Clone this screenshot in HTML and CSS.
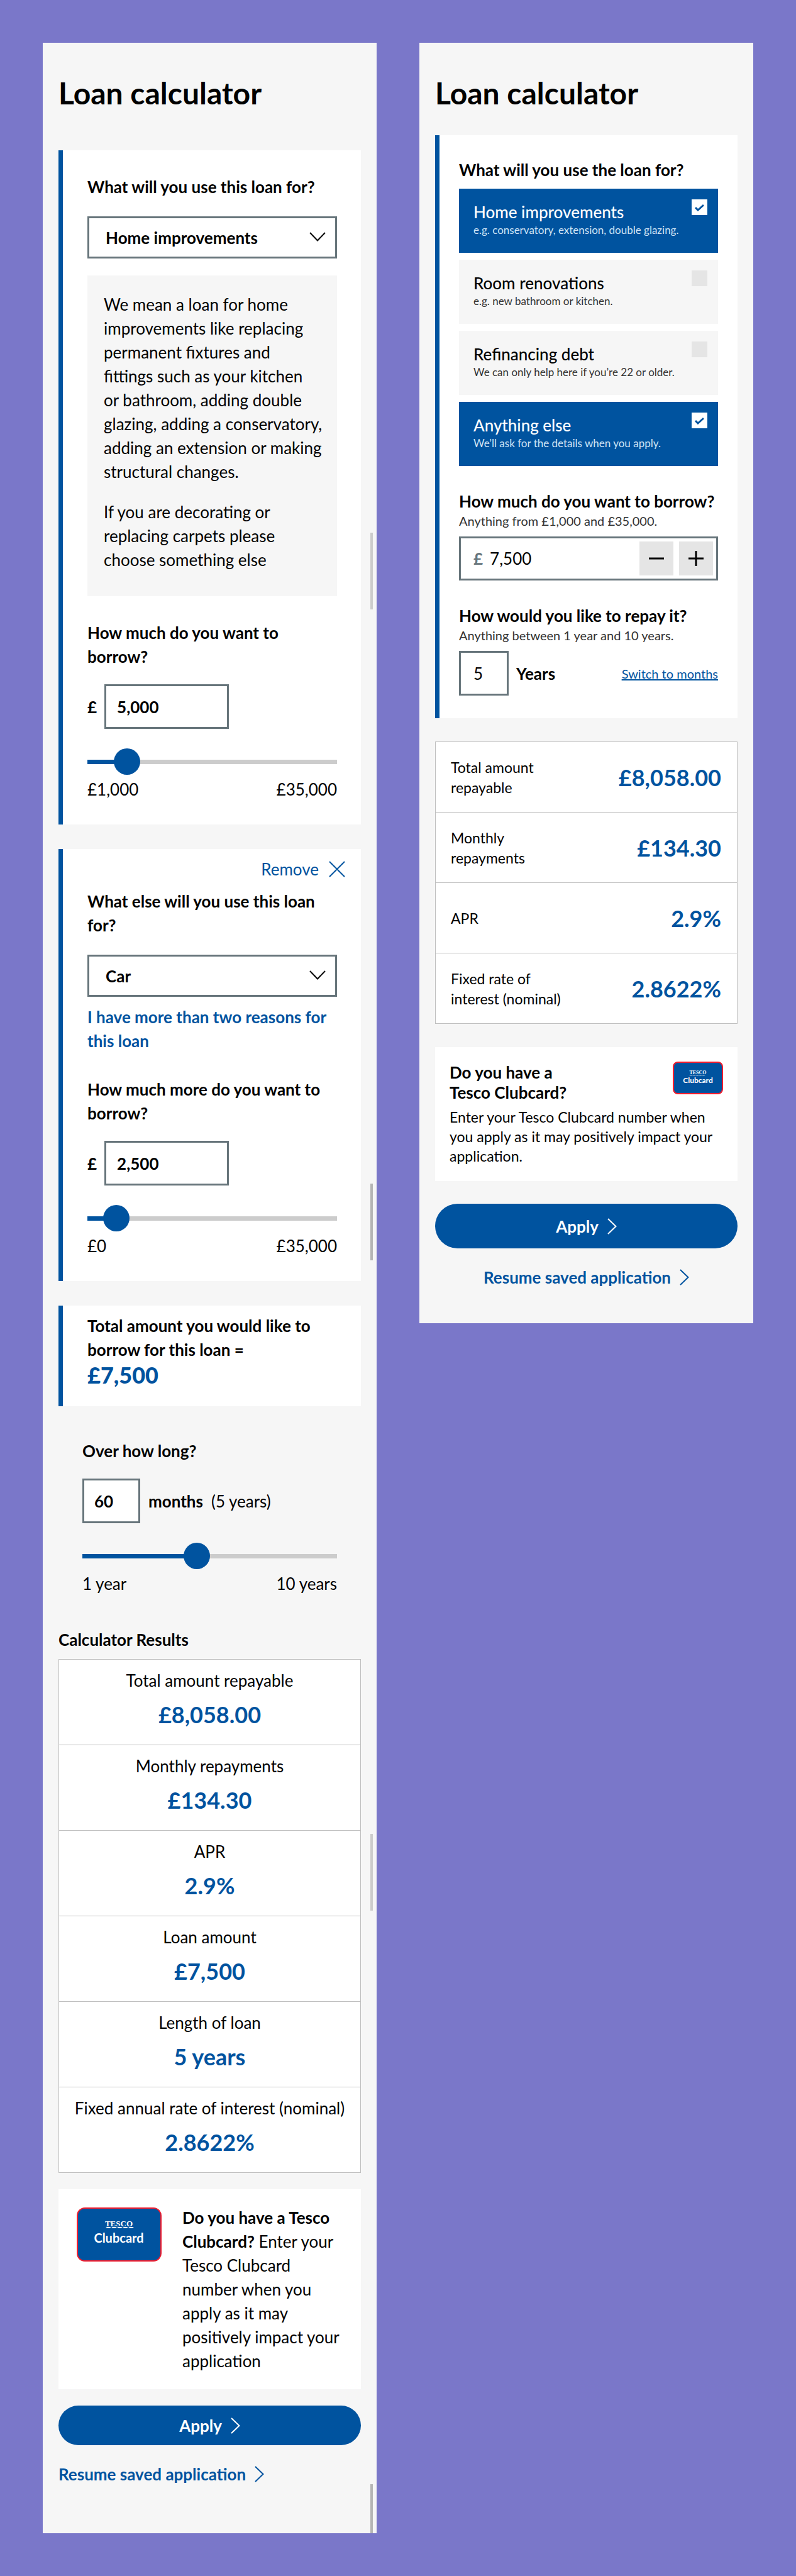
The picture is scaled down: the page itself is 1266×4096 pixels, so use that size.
FILE: index.html
```html
<!DOCTYPE html>
<html lang="en">
<head>
  <meta charset="UTF-8">
  <meta name="viewport" content="width=device-width, initial-scale=1.0">
  <title>Loan calculator</title>
  <link rel="stylesheet" href="styles.css">
</head>
<body>

  <main class="panel">
    <h1>Loan calculator</h1>

    <section class="card">
      <label class="question" for="reason">What will you use this loan for?</label>
      <div class="select">
        <select id="reason">
          <option>Home improvements</option>
          <option>Car</option>
        </select>
        <svg class="icon chevron-down" viewBox="0 0 26 15"><path d="M1 1l12 12.500L25 1"/></svg>
      </div>
      <div class="note">
        <p>We mean a loan for home<br>improvements like replacing<br>permanent fixtures and<br>fittings such as your kitchen<br>or bathroom, adding double<br>glazing, adding a conservatory,<br>adding an extension or making<br>structural changes.</p>
        <p>If you are decorating or<br>replacing carpets please<br>choose something else</p>
      </div>
      <label class="question" for="amount">How much do you want to<br>borrow?</label>
      <div class="amount">
        <span>£</span>
        <input type="text" id="amount" value="5,000">
      </div>
      <input class="slider" type="range" min="1000" max="35000" value="5000" step="500" style="--fill: 12%" aria-label="Amount">
      <div class="limits"><span>£1,000</span><span>£35,000</span></div>
    </section>

    <section class="card card-extra">
      <button type="button" class="remove">Remove <svg class="icon cross" viewBox="0 0 26 26"><path d="M1 1l24 24M25 1L1 25"/></svg></button>
      <label class="question" for="reasonTwo">What else will you use this loan<br>for?</label>
      <div class="select">
        <select id="reasonTwo">
          <option>Car</option>
          <option>Home improvements</option>
        </select>
        <svg class="icon chevron-down" viewBox="0 0 26 15"><path d="M1 1l12 12.500L25 1"/></svg>
      </div>
      <a class="more" href="#">I have more than two reasons for<br>this loan</a>
      <label class="question" for="amountTwo">How much more do you want to<br>borrow?</label>
      <div class="amount">
        <span>£</span>
        <input type="text" id="amountTwo" value="2,500">
      </div>
      <input class="slider" type="range" min="0" max="35000" value="2500" step="500" style="--fill: 8%" aria-label="Extra amount">
      <div class="limits"><span>£0</span><span>£35,000</span></div>
    </section>

    <section class="card card-total">
      <p>Total amount you would like to<br>borrow for this loan =</p>
      <strong>£7,500</strong>
    </section>

    <section class="term">
      <label class="question" for="months">Over how long?</label>
      <div class="months">
        <input type="text" id="months" value="60">
        <b>months</b>
        <span>(5 years)</span>
      </div>
      <input class="slider" type="range" min="12" max="120" value="60" style="--fill: 45%" aria-label="Months">
      <div class="limits"><span>1 year</span><span>10 years</span></div>
    </section>

    <h2>Calculator Results</h2>
    <table class="results stacked">
      <tr><th>Total amount repayable</th><td>£8,058.00</td></tr>
      <tr><th>Monthly repayments</th><td>£134.30</td></tr>
      <tr><th>APR</th><td>2.9%</td></tr>
      <tr><th>Loan amount</th><td>£7,500</td></tr>
      <tr><th>Length of loan</th><td>5 years</td></tr>
      <tr><th>Fixed annual rate of interest (nominal)</th><td>2.8622%</td></tr>
    </table>

    <section class="clubcard">
      <svg class="clubcard-logo" viewBox="0 0 135 86">
        <rect class="card-face" x="1" y="1" width="133" height="84" rx="12"/>
        <text class="card-brand" x="67" y="30" text-anchor="middle">TESCO</text>
        <path class="card-stripes" d="M48 31h7l-3 2h-6zM57 31h7l-3 2h-6zM66 31h7l-3 2h-6zM75 31h7l-3 2h-6zM84 31h7l-3 2h-6z"/>
        <text class="card-name" x="67" y="56" text-anchor="middle">Clubcard</text>
      </svg>
      <p><b>Do you have a Tesco<br>Clubcard?</b> Enter your<br>Tesco Clubcard<br>number when you<br>apply as it may<br>positively impact your<br>application</p>
    </section>

    <button type="button" class="apply">Apply <svg class="icon chevron-right" viewBox="0 0 15 26"><path d="M1 1l12.500 12L1 25"/></svg></button>
    <a class="resume" href="#">Resume saved application <svg class="icon chevron-right" viewBox="0 0 15 26"><path d="M1 1l12.500 12L1 25"/></svg></a>

    <i class="scrollbar scrollbar-one"></i>
    <i class="scrollbar scrollbar-two"></i>
    <i class="scrollbar scrollbar-three"></i>
    <i class="scrollbar scrollbar-four"></i>
  </main>

  <main class="panel panel-new">
    <h1>Loan calculator</h1>

    <section class="card">
      <fieldset>
        <legend class="question">What will you use the loan for?</legend>
        <label class="tile checked">
          <span class="tile-title">Home improvements</span>
          <span class="tile-hint">e.g. conservatory, extension, double glazing.</span>
          <input type="checkbox" checked>
          <svg class="icon tick" viewBox="0 0 15 12"><path d="M1 6l4 4 9-8"/></svg>
        </label>
        <label class="tile">
          <span class="tile-title">Room renovations</span>
          <span class="tile-hint">e.g. new bathroom or kitchen.</span>
          <input type="checkbox">
        </label>
        <label class="tile">
          <span class="tile-title">Refinancing debt</span>
          <span class="tile-hint">We can only help here if you’re 22 or older.</span>
          <input type="checkbox">
        </label>
        <label class="tile checked">
          <span class="tile-title">Anything else</span>
          <span class="tile-hint">We’ll ask for the details when you apply.</span>
          <input type="checkbox" checked>
          <svg class="icon tick" viewBox="0 0 15 12"><path d="M1 6l4 4 9-8"/></svg>
        </label>
      </fieldset>

      <label class="question" for="borrow">How much do you want to borrow?</label>
      <p class="hint">Anything from £1,000 and £35,000.</p>
      <div class="stepper">
        <span>£</span>
        <input type="text" id="borrow" value="7,500">
        <button type="button" aria-label="Less"><svg class="icon" viewBox="0 0 24 24"><path d="M0 12h24"/></svg></button>
        <button type="button" aria-label="More"><svg class="icon" viewBox="0 0 24 24"><path d="M0 12h24M12 0v24"/></svg></button>
      </div>

      <label class="question" for="years">How would you like to repay it?</label>
      <p class="hint">Anything between 1 year and 10 years.</p>
      <div class="years">
        <input type="text" id="years" value="5">
        <b>Years</b>
        <a href="#">Switch to months</a>
      </div>
    </section>

    <table class="results">
      <tr><th>Total amount<br>repayable</th><td>£8,058.00</td></tr>
      <tr><th>Monthly<br>repayments</th><td>£134.30</td></tr>
      <tr><th>APR</th><td>2.9%</td></tr>
      <tr><th>Fixed rate of<br>interest (nominal)</th><td>2.8622%</td></tr>
    </table>

    <section class="clubcard">
      <div class="clubcard-head">
        <h2>Do you have a<br>Tesco Clubcard?</h2>
        <svg class="clubcard-logo" viewBox="0 0 80 52">
          <rect class="card-face" x="1" y="1" width="78" height="50" rx="7"/>
          <text class="card-brand" x="40" y="20" text-anchor="middle">TESCO</text>
          <path class="card-stripes" d="M28 21h4l-2 1h-4zM33 21h4l-2 1h-4zM38 21h4l-2 1h-4zM43 21h4l-2 1h-4zM48 21h4l-2 1h-4z"/>
          <text class="card-name" x="40" y="34" text-anchor="middle">Clubcard</text>
        </svg>
      </div>
      <p>Enter your Tesco Clubcard number when<br>you apply as it may positively impact your<br>application.</p>
    </section>

    <button type="button" class="apply">Apply <svg class="icon chevron-right" viewBox="0 0 15 26"><path d="M1 1l12.500 12L1 25"/></svg></button>
    <a class="resume" href="#">Resume saved application <svg class="icon chevron-right" viewBox="0 0 15 26"><path d="M1 1l12.500 12L1 25"/></svg></a>
  </main>

</body>
</html>
```
FILE: styles.css
```css
* {
  box-sizing: border-box;
}
body {
  margin: 0;
  padding: 68px;
  display: flex;
  align-items: flex-start;
  gap: 68px;
  background-color: #7a77c9;
  font-family: Lato, "Open Sans", sans-serif;
  font-size: 26px;
  line-height: 38px;
  color: #000;
}
p, h1, h2 {
  margin: 0;
}
button, input, select {
  font: inherit;
  color: inherit;
}
input[type="text"], select {
  border: 3px solid #67757b;
  border-radius: 0;
  background-color: #fff;
  font-weight: bold;
}
a {
  color: #00539f;
  text-decoration: none;
}
.icon {
  fill: none;
  stroke: currentColor;
  stroke-width: 2;
}
.panel {
  position: relative;
  flex: 1;
  min-width: 0;
  padding: 52px 25px 75px;
  background-color: #f6f6f6;
}
h1 {
  margin-bottom: 63px;
  font-size: 48px;
  line-height: 56px;
}
h2 {
  font-size: 26px;
}

/* cards */
.card {
  margin-bottom: 39px;
  padding: 39px 38px 37px 39px;
  border-left: 7px solid #00539f;
  background-color: #fff;
}
.question {
  display: block;
  padding: 0;
  font-weight: bold;
}
.select {
  position: relative;
  margin: 28px 0 27px;
}
select {
  display: block;
  width: 100%;
  height: 67px;
  padding: 0 26px;
  appearance: none;
}
.chevron-down {
  position: absolute;
  top: 25px;
  right: 18px;
  width: 26px;
  height: 15px;
  pointer-events: none;
}
.note {
  margin-bottom: 39px;
  padding: 27px 20px 39px 26px;
  background-color: #f6f6f6;
}
.note p + p {
  margin-top: 26px;
}
.amount {
  display: flex;
  align-items: center;
  gap: 12px;
  margin-top: 25px;
  font-weight: bold;
}
.amount input {
  width: 198px;
  height: 71px;
  padding: 0 17px;
}
.slider {
  display: block;
  width: 100%;
  height: 42px;
  margin: 31px 0 4px;
  appearance: none;
  background: none;
}
.slider::-webkit-slider-runnable-track {
  height: 7px;
  background: linear-gradient(to right, #00539f var(--fill), #ccc var(--fill));
}
.slider::-webkit-slider-thumb {
  width: 42px;
  height: 42px;
  margin-top: -18px;
  border-radius: 50%;
  background-color: #00539f;
  appearance: none;
}
.limits {
  display: flex;
  justify-content: space-between;
}
.card-extra {
  padding-top: 13px;
}
.card-extra .select {
  margin-bottom: 13px;
}
.remove {
  display: flex;
  align-items: center;
  gap: 16px;
  margin: 0 -13px 13px auto;
  padding: 0;
  border: none;
  background: none;
  color: #00539f;
}
.cross {
  width: 26px;
  height: 26px;
}
.more {
  display: block;
  margin-bottom: 39px;
  font-weight: bold;
}
.card-total {
  margin-bottom: 52px;
  padding-top: 13px;
  padding-bottom: 29px;
  font-weight: bold;
}
.card-total strong {
  display: block;
  font-size: 36px;
  line-height: 42px;
  color: #00539f;
}
.term {
  margin-bottom: 51px;
  padding: 0 38px;
}
.months {
  display: flex;
  align-items: center;
  gap: 13px;
  margin-top: 25px;
}
.months input {
  width: 92px;
  height: 71px;
  padding: 0 16px;
}

/* results */
.results {
  width: 100%;
  border-collapse: collapse;
  background-color: #fff;
}
.results tr {
  border: 1px solid #bfbfbf;
}
.results th {
  font-weight: normal;
}
.results td {
  font-size: 36px;
  font-weight: bold;
  line-height: 42px;
  color: #00539f;
}
.stacked {
  margin: 12px 0 26px;
  text-align: center;
}
.stacked th {
  display: block;
  padding: 14px 0;
}
.stacked td {
  display: block;
  padding: 0 0 27px;
}

/* clubcard */
.clubcard {
  display: flex;
  gap: 33px;
  margin-bottom: 26px;
  padding: 26px 29px;
  background-color: #fff;
}
.clubcard-logo {
  flex: none;
  width: 135px;
  height: 86px;
  margin-top: 3px;
}
.card-face {
  fill: #00539f;
  stroke: #ee1c2e;
  stroke-width: 2;
}
.card-brand {
  fill: #fff;
  font-family: "Liberation Serif", serif;
  font-size: 13px;
  font-weight: bold;
}
.card-stripes {
  fill: #fff;
}
.card-name {
  fill: #fff;
  font-size: 20px;
  font-weight: bold;
}
.apply {
  display: flex;
  align-items: center;
  justify-content: center;
  gap: 14px;
  width: 100%;
  height: 63px;
  margin-bottom: 27px;
  border: none;
  border-radius: 36px;
  background-color: #00539f;
  color: #fff;
  font-weight: bold;
}
.resume {
  display: flex;
  align-items: center;
  gap: 14px;
  font-weight: bold;
}
.chevron-right {
  width: 15px;
  height: 26px;
}
.scrollbar {
  position: absolute;
  right: 6px;
  width: 4px;
  height: 122px;
  background-color: #ccc;
}
.scrollbar-one {
  top: 779px;
}
.scrollbar-two {
  top: 1814px;
  background-color: #b5b5b5;
}
.scrollbar-three {
  top: 2848px;
}
.scrollbar-four {
  bottom: 0;
  height: 78px;
  background-color: #b5b5b5;
}

/* new design */
.panel-new {
  padding-bottom: 54px;
}
.panel-new h1 {
  margin-bottom: 39px;
}
.panel-new .card {
  margin-bottom: 37px;
  padding: 36px 31px;
}
.panel-new label.question {
  margin-top: 39px;
  line-height: 34px;
}
fieldset {
  margin: 0;
  padding: 0;
  border: none;
}
.tile {
  position: relative;
  display: block;
  height: 102px;
  margin-top: 11px;
  padding: 22px 23px;
  background-color: #f6f6f6;
}
.tile-title {
  display: block;
  font-size: 26px;
  font-weight: 500;
  line-height: 30px;
}
.tile-hint {
  display: block;
  margin-top: 2px;
  font-size: 17px;
  line-height: 24px;
  color: #333;
}
.tile input {
  position: absolute;
  top: 17px;
  right: 17px;
  width: 25px;
  height: 25px;
  margin: 0;
  appearance: none;
  background-color: #e5e5e5;
}
.tile.checked {
  background-color: #00539f;
  color: #fff;
}
.checked .tile-hint {
  color: #cfe3f5;
}
.checked input {
  background-color: #fff;
}
.tick {
  position: absolute;
  top: 24px;
  right: 22px;
  width: 15px;
  height: 12px;
  color: #00539f;
  stroke-width: 3;
}
.hint {
  margin-bottom: 11px;
  font-size: 20px;
  line-height: 28px;
  color: #333;
}
.stepper {
  display: flex;
  align-items: center;
  gap: 9px;
  height: 70px;
  padding: 0 5px 0 20px;
  border: 3px solid #67757b;
}
.stepper span {
  color: #67757b;
  font-weight: bold;
}
.stepper input[type="text"] {
  flex: 1;
  min-width: 0;
  padding: 0 2px;
  border: none;
  font-weight: normal;
}
.stepper button {
  display: flex;
  align-items: center;
  justify-content: center;
  width: 54px;
  height: 54px;
  border: none;
  background-color: #e5e5e5;
}
.stepper .icon {
  flex: none;
  width: 24px;
  height: 24px;
  stroke-width: 3;
}
.years {
  display: flex;
  align-items: center;
  gap: 12px;
}
.years input {
  width: 79px;
  height: 71px;
  padding: 0 20px;
  font-weight: normal;
}
.years a {
  margin-left: auto;
  font-size: 20px;
  text-decoration: underline;
}
.panel-new .results {
  margin-bottom: 37px;
}
.panel-new .results tr {
  height: 112px;
}
.panel-new .results th {
  padding: 0 24px;
  font-size: 23px;
  line-height: 32px;
  text-align: left;
}
.panel-new .results td {
  padding: 0 25px 0 0;
  text-align: right;
}
.panel-new .clubcard {
  display: block;
  margin-bottom: 36px;
  padding: 24px 23px;
  font-size: 23px;
  line-height: 31px;
}
.clubcard-head {
  display: flex;
  justify-content: space-between;
  margin-bottom: 8px;
}
.clubcard-head h2 {
  line-height: 32px;
}
.panel-new .clubcard-logo {
  width: 80px;
  height: 52px;
  margin-top: -1px;
}
.panel-new .card-brand {
  font-size: 8px;
}
.panel-new .card-name {
  font-size: 12px;
}
.panel-new .apply {
  height: 71px;
}
.panel-new .resume {
  justify-content: center;
}
```
